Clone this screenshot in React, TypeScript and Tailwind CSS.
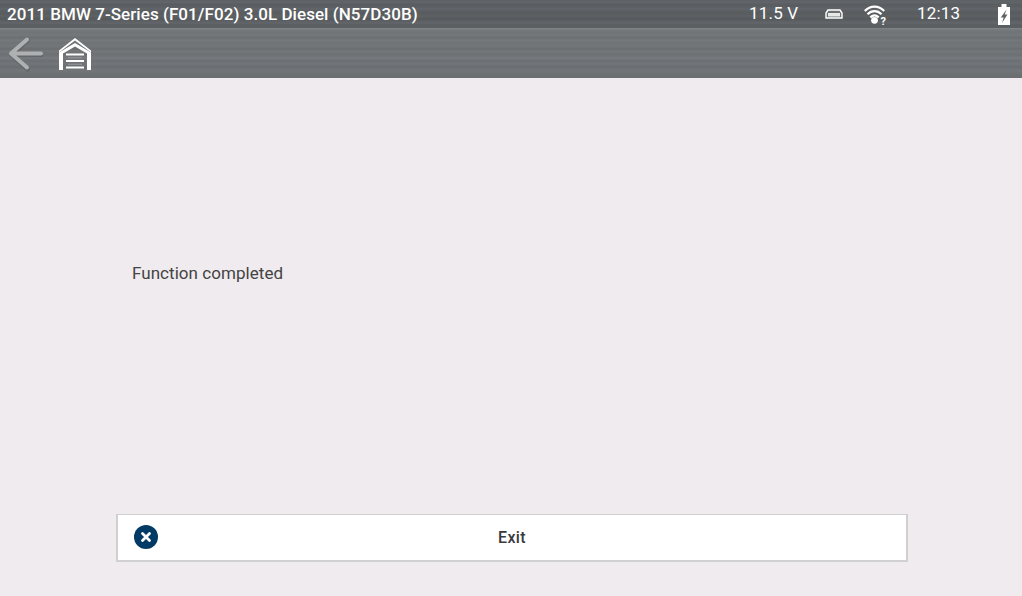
const font = "font-['Roboto','Liberation_Sans',sans-serif]";

function Back() {
  return (
    <svg width="36" height="36" viewBox="0 0 36 36" fill="none" className="block">
      <path d="M34.500 18H4M20 3.500 4 18l16 14.500" stroke="#55585a" strokeOpacity=".5" strokeWidth="4.500" strokeLinecap="round" strokeLinejoin="round" transform="translate(.6 .8)" />
      <path d="M34 17.500H4M20 3.500 4 17.500l16 14" stroke="#aeb0b2" strokeWidth="4" strokeLinecap="round" strokeLinejoin="round" />
    </svg>
  );
}

function Garage() {
  return (
    <svg width="34" height="34" viewBox="0 0 34 34" fill="none" className="block">
      <path d="M1 13.500 17 1l16 12.500v2L17 3.500 1 15.500z" fill="#fff" />
      <path d="M1 15.500 17 6l16 9.500V33h-4V16.500L17 9.500 5 16.500V33H1z" fill="#fff" />
      <path d="M8 17.500H26M8 24H26M8 30.500H26" stroke="#fff" strokeWidth="2.200" />
      <path d="M10 20.800H24M10 27.300H24" stroke="#fff" strokeOpacity=".25" strokeWidth="1" />
    </svg>
  );
}

function Usb() {
  return (
    <svg width="18" height="10" viewBox="0 0 18 10" className="block">
      <path d="M3 1h12l2 3v5H1V4z" fill="#6d7073" stroke="#fff" strokeWidth="1.400" />
      <path d="M3 4h12v3.500H3z" fill="#e6e7e7" />
    </svg>
  );
}

function Wifi() {
  return (
    <svg width="24" height="24" viewBox="0 0 24 24" fill="none" className="block">
      <path d="M.8 7C6.300 1.200 14.700 1.200 20.200 7M3.500 10.200c4.200-4.200 9.800-4.200 14 0M6.300 13.400c2.700-2.500 5.700-2.500 8.400 0" stroke="#fff" strokeWidth="2.200" />
      <circle cx="10.500" cy="16.300" r="3.400" fill="#fff" />
      <text x="16.500" y="21" fontSize="11" fontWeight="700" fill="#fff" fontFamily="Roboto, sans-serif">?</text>
    </svg>
  );
}

function Battery() {
  return (
    <svg width="12" height="21" viewBox="0 0 12 21" className="block">
      <path d="M3.500 0h5v3H12v18H0V3h3.500z" fill="#fff" />
      <path d="M8.500 5.500 2.800 13.500h2.900L4 19l5.500-8.500H6.700z" fill="#5f6264" />
    </svg>
  );
}

export default function App() {
  return (
    <div className={`${font} flex h-[596px] w-[1022px] flex-col overflow-hidden bg-[#f0ebef]`}>
      <header className="flex h-[28px] items-center bg-[linear-gradient(180deg,#5e6265_0px,#61656a_3px,#595d60_4px,#5c6063_7px,#62666a_9px,#5b5f62_11px,#585c5f_14px,#5e6265_16px,#56595c_19px,#5c6063_21px,#62666a_23px,#595d60_25px,#5c6063_28px)] pl-[7px] text-white">
        <span className="flex-1 text-[17px] leading-[28px] font-medium tracking-[0.06px] whitespace-nowrap">2011 BMW 7-Series (F01/F02) 3.0L Diesel (N57D30B)</span>
        <span className="w-[50px] text-[17px] tracking-[0.2px] whitespace-nowrap">11.5 V</span>
        <span className="ml-[26px]"><Usb /></span>
        <span className="ml-[21px] mt-[3px]"><Wifi /></span>
        <span className="ml-[29px] w-[46px] text-[17px] tracking-[0.2px]">12:13</span>
        <span className="ml-[35px] mr-[12px]"><Battery /></span>
      </header>
      <nav className="flex h-[50px] items-center gap-[15px] border-t border-[#7f8386] bg-[linear-gradient(180deg,#787c7f_0px,#707477_3px,#74787b_6px,#6b6f72_9px,#75797c_11px,#6f7376_14px,#73777a_17px,#6a6e71_20px,#73777a_22px,#6d7174_26px,#76797d_29px,#6c7073_32px,#72767a_35px,#696d70_38px,#72767a_41px,#6c7073_45px,#696d70_50px)] pl-[7px]">
        <Back />
        <Garage />
      </nav>
      <main className="flex flex-1 flex-col px-[116px]">
        <p className="mt-[185px] ml-[16px] text-[17px] leading-[20px] tracking-[0.05px] text-[#434343]">Function completed</p>
        <button className="relative mt-[231px] flex h-[48px] w-[792px] items-center justify-center border-2 border-t border-l-2 border-[#d0d0d0] bg-white text-[16px] font-medium tracking-[0.35px] text-[#3a3a3a]">
          <svg width="24" height="24" viewBox="0 0 24 24" className="absolute left-[16px] top-[10px]">
            <circle cx="12" cy="12" r="12" fill="#023a66" />
            <path d="M8.500 8.500l7 7M15.500 8.500l-7 7" stroke="#fff" strokeWidth="2.800" strokeLinecap="round" />
          </svg>
          Exit
        </button>
      </main>
    </div>
  );
}
